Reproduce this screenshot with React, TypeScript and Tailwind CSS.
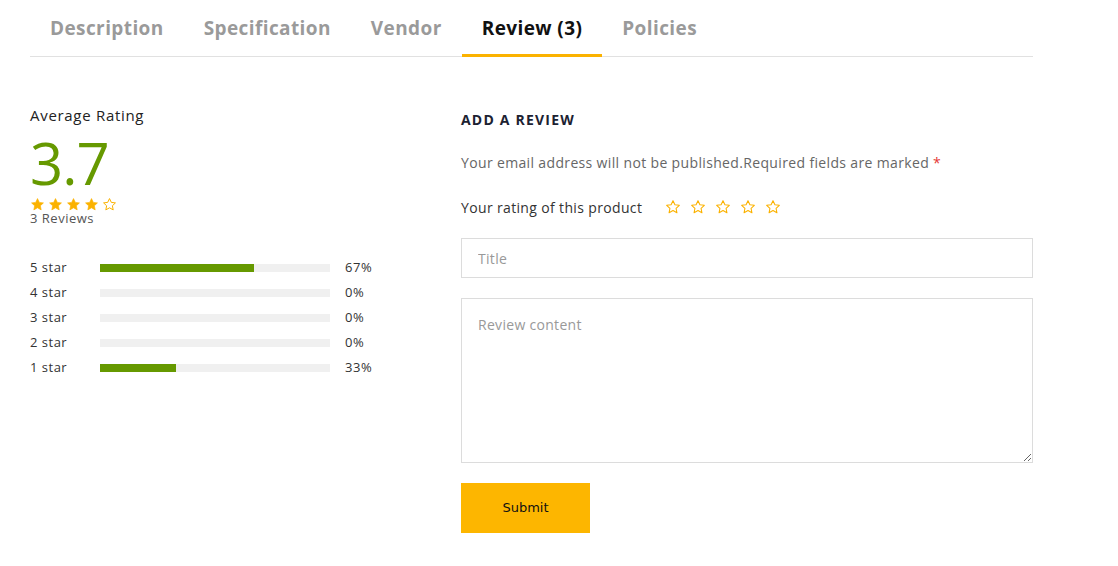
import React from 'react'

const font = { fontFamily: '"Open Sans", "Liberation Sans", sans-serif' }

function Star({ filled, size = 15 }: { filled: boolean; size?: number }) {
  return (
    <svg width={size} height={size} viewBox="0 0 24 24">
      <path
        d="M12 2.5l2.9 6.1 6.6.8-4.9 4.6 1.3 6.6L12 17.3l-5.9 3.3 1.3-6.6-4.9-4.6 6.6-.8z"
        fill={filled ? '#fbb200' : 'none'}
        stroke="#fbb200"
        strokeWidth={filled ? 1 : 1.6}
        strokeLinejoin="round"
      />
    </svg>
  )
}

const tabs = ['Description', 'Specification', 'Vendor', 'Review (3)', 'Policies']

const bars = [
  { label: '5 star', pct: 67 },
  { label: '4 star', pct: 0 },
  { label: '3 star', pct: 0 },
  { label: '2 star', pct: 0 },
  { label: '1 star', pct: 33 },
]

export default function App() {
  return (
    <div className="min-h-screen bg-white tracking-[0.35px]" style={font}>
      <div className="ml-[30px] w-[1003px]">
        {/* Tabs */}
        <div className="flex border-b border-[#e1e1e1] h-[57px]">
          {tabs.map((t) => {
            const active = t === 'Review (3)'
            return (
              <div
                key={t}
                className={
                  'px-5 pt-[14px] text-[19px] font-bold leading-[28px] tracking-[0.4px] ' +
                  (active
                    ? 'text-[#111] border-b-[3px] border-[#fbb200] -mb-px'
                    : 'text-[#9a9a9a]')
                }
              >
                {t}
              </div>
            )
          })}
        </div>

        <div className="flex pt-[47px]">
          {/* Left column */}
          <div className="w-[431px] shrink-0">
            <p className="text-[15px] text-[#222] leading-[22px] tracking-[0.7px]">Average Rating</p>
            <p className="text-[58px] leading-[58px] text-[#669900] mt-[8px] tracking-[-1px]">3.7</p>
            <div className="flex gap-[3px] mt-[5px]">
              <Star filled />
              <Star filled />
              <Star filled />
              <Star filled />
              <Star filled={false} />
            </div>
            <p className="text-[13px] text-[#555] leading-[14px] -mt-[1px] tracking-[0.5px]">3 Reviews</p>

            <div className="mt-[30px] flex flex-col">
              {bars.map((b) => (
                <div key={b.label} className="flex items-center h-[25px]">
                  <span className="w-[70px] text-[13px] text-[#333] tracking-[0.5px]">{b.label}</span>
                  <div className="w-[230px] h-[8px] bg-[#f0f0f0]">
                    <div className="h-full bg-[#669900]" style={{ width: `${b.pct}%` }} />
                  </div>
                  <span className="ml-[15px] text-[13px] text-[#333] tracking-[0.5px]">{b.pct}%</span>
                </div>
              ))}
            </div>
          </div>

          {/* Right column */}
          <div className="flex-1">
            <h3 className="text-[14px] font-bold uppercase text-[#1c2232] leading-[20px] mt-[6px] tracking-[1.2px]">
              Add a review
            </h3>
            <p className="text-[14px] text-[#666] mt-[23px] leading-[20px]">
              Your email address will not be published.Required fields are marked{' '}
              <span className="text-[#e53935]">*</span>
            </p>
            <div className="flex items-center mt-[24px] h-[20px]">
              <span className="text-[14px] text-[#333] mr-[23px]">Your rating of this product</span>
              <div className="flex gap-[9px]">
                {[0, 1, 2, 3, 4].map((i) => (
                  <Star key={i} filled={false} size={16} />
                ))}
              </div>
            </div>

            <input
              placeholder="Title"
              className="block w-full h-[40px] mt-[21px] border border-[#dcdcdc] px-4 text-[14px] tracking-[0.3px] text-[#333] placeholder:text-[#999] outline-none"
            />
            <textarea
              placeholder="Review content"
              className="block w-full h-[165px] mt-[20px] border border-[#dcdcdc] px-4 pt-[15px] text-[14px] tracking-[0.3px] text-[#333] placeholder:text-[#999] outline-none"
            />
            <button
              className="mt-[20px] w-[129px] h-[50px] bg-[#fdb600] text-[13px] text-[#111] tracking-normal"
              style={{ fontFamily: '"DejaVu Sans", sans-serif' }}
            >
              Submit
            </button>
          </div>
        </div>
      </div>
    </div>
  )
}
